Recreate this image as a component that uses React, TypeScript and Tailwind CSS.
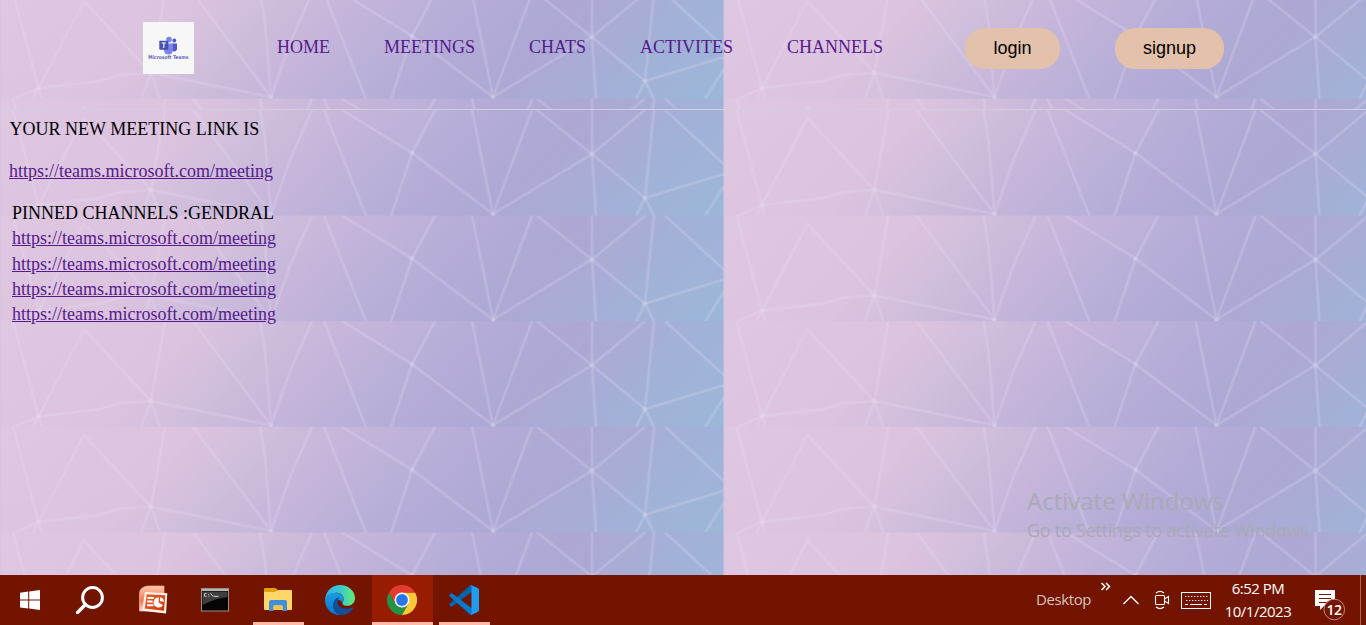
import type { ReactNode } from 'react';

const meshLines = [
  'M13 0L38.5 95L84 8L151 80L165 0',
  'M14 106L38.5 95L33 106M38.5 95L42 106M38.5 95L100 88L120 82L151 80L271 104',
  'M151 80L141 106M151 80L160 106',
  'M193 0L271 104L265 30L260 0M312 0L290 50L271 104',
  'M324 0L366 106M435 0L412 43L391 106M342 0L412 43L493 104',
  'M472 0L493 104L532 0M493 104L592 44L645 88',
  'M537 0L592 44L645 0M592 0L592 44L596 106',
  'M654 0L645 88L724 64M645 88L636 106M645 88L654 106',
  'M665 0L724 54M724 76L705 106',
];

const nodes = [
  [38.5, 95],
  [151, 80],
  [271, 104],
  [412, 43],
  [493, 104],
  [592, 44],
  [645, 88],
];

function MeshBackground({ id, shift }: { id: string; shift: number }) {
  return (
    <svg className="absolute inset-0 h-full w-full" aria-hidden="true">
      <defs>
        <linearGradient id={`${id}-g`} gradientUnits="userSpaceOnUse" x1="0" y1="0" x2="452" y2="407">
          <stop offset="0" stopColor="#dec7e1" />
          <stop offset="0.24" stopColor="#dcc3df" />
          <stop offset="0.3" stopColor="#d4c0dd" />
          <stop offset="0.37" stopColor="#cabbdb" />
          <stop offset="0.44" stopColor="#c5b5da" />
          <stop offset="0.51" stopColor="#bdb1d9" />
          <stop offset="0.6" stopColor="#b4acd7" />
          <stop offset="0.71" stopColor="#ada8d4" />
          <stop offset="0.79" stopColor="#a9acd5" />
          <stop offset="0.87" stopColor="#a2b1d7" />
          <stop offset="1" stopColor="#9bb7d8" />
        </linearGradient>
        <pattern id={id} patternUnits="userSpaceOnUse" x="0" y={shift} width="723.5" height="105.6">
          <rect width="724" height="106" fill={`url(#${id}-g)`} />
          <path d="M592 0V44L539 0Z" fill="#b0a4d3" opacity=".25" />
          <path d="M311 0H435L412 43L342 0Z" fill="#c4b3db" opacity=".25" />
          <path d="M654 0H724V64L645 88Z" fill="#9fb2d8" opacity=".35" />
          <g fill="none" stroke="#e9e0f4" strokeWidth="2.6" strokeLinejoin="round" opacity=".23">
            {meshLines.map((d) => (
              <path key={d} d={d} />
            ))}
          </g>
          {nodes.map(([x, y]) => (
            <circle key={x} cx={x} cy={y} r="2.2" fill="#ebe2f5" opacity=".35" />
          ))}
          <rect width="1" height="106" fill="#d6c4df" opacity=".7" />
        </pattern>
      </defs>
      <rect width="100%" height="100%" fill={`url(#${id})`} />
    </svg>
  );
}

function TeamsLogo() {
  return (
    <svg width="51" height="52" viewBox="0 0 51 52" className="block overflow-visible">
      <rect width="51" height="52" fill="#f7f7f8" />
      <circle cx="26" cy="17.5" r="2.8" fill="#7b83eb" />
      <circle cx="31.3" cy="18.5" r="1.9" fill="#5059c9" />
      <path d="M29 21.5h5v6a3 3 0 0 1-5 1z" fill="#5059c9" />
      <path d="M21 21.5h9v6.5a4.5 4.5 0 0 1-9 0z" fill="#7b83eb" />
      <rect x="16.3" y="18.7" width="9" height="9" rx=".6" fill="#4650b5" />
      <path d="M18.6 21h4.4M20.8 21v5" stroke="#fff" strokeWidth="1.1" />
      <text x="5.3" y="36.8" textLength="40" lengthAdjust="spacingAndGlyphs" className="font-['DejaVu_Sans',sans-serif] text-[5px] font-bold" fill="#5d65bd">
        Microsoft Teams
      </text>
    </svg>
  );
}

function WindowsIcon() {
  return (
    <svg width="20" height="20" viewBox="0 0 20 20" fill="#fff">
      <path d="M0 2.7L8.2 1.6V9.5H0zM9.2 1.4L20 0V9.5H9.2zM0 10.5H8.2V18.5L0 17.4zM9.2 10.5H20V20L9.2 18.6z" />
    </svg>
  );
}

function SearchIcon() {
  return (
    <svg width="28" height="28" viewBox="0 0 28 28" fill="none" stroke="#fff">
      <circle cx="16.5" cy="11.5" r="9.9" strokeWidth="3" />
      <path d="M9.5 18.5L1.5 26.5" strokeWidth="3.4" strokeLinecap="round" />
    </svg>
  );
}

function PowerPointIcon() {
  return (
    <svg width="30" height="30" viewBox="0 0 30 30">
      <defs>
        <linearGradient id="pp" x1="0" y1="0" x2="0" y2="1">
          <stop offset="0" stopColor="#ffc4ae" />
          <stop offset=".6" stopColor="#f27a55" />
          <stop offset="1" stopColor="#ffd9c8" />
        </linearGradient>
        <linearGradient id="pc" x1="0" y1="0" x2="1" y2="1">
          <stop offset="0" stopColor="#f0602f" />
          <stop offset="1" stopColor="#cf3208" />
        </linearGradient>
      </defs>
      <path d="M6 2Q8 1 11 1H26V9L22 26L1.5 26V10Q1 4 6 2z" fill="url(#pp)" stroke="#f6b29b" strokeWidth=".7" />
      <path d="M7 7L29.3 8.3L28 28.5L4 25.8z" fill="#fff3e9" />
      <path d="M8.7 9.2L27.2 10.3L26 25.8L6.8 23.6z" fill="url(#pc)" />
      <path d="M9.5 13h6.5M9.2 16.6h5.5M8.9 20.2h6.5" stroke="#fff" strokeWidth="2" />
      <path d="M21 12.5a5 5 0 1 0 4 7.4L20.7 17.8z" fill="#fff" />
      <path d="M22.2 12.2a4.4 4.4 0 0 1 3.6 4.6L22 16.2z" fill="#fff" />
    </svg>
  );
}

function TerminalIcon() {
  return (
    <svg width="28" height="24" viewBox="0 0 28 24">
      <rect x=".5" y=".5" width="27" height="22.5" fill="#050505" stroke="#98908d" />
      <path d="M1 1h26v2H1z" fill="#b8b4b2" />
      <path d="M1.5 3.5H26.5V9Q15 10 1.5 17z" fill="#3f3f3f" />
      <path d="M5.5 5.5H4.2Q3.2 5.5 3.2 7T4.2 8.4H5.5M7.7 6v.9M7.7 7.8v.8M9.5 5.2L12 8.5M12.5 8.3h5" stroke="#e5e5e5" strokeWidth=".9" fill="none" />
    </svg>
  );
}

function FolderIcon() {
  return (
    <svg width="28" height="24" viewBox="0 0 28 24">
      <path d="M0 1Q0 0 1 0H11.5L14 2.5V4H0z" fill="#e3a008" />
      <path d="M0 4H11L14 2H27Q28 2 28 3V21Q28 22 27 22H1Q0 22 0 21z" fill="#ffd667" />
      <path d="M5 14Q5 12 7 12H21Q23 12 23 14V23H18.5V17.5H9.5V23H5z" fill="#3f90d8" />
      <path d="M9.5 17.5H18.5V22H9.5z" fill="#f3c34a" />
    </svg>
  );
}

function EdgeIcon() {
  return (
    <svg width="30" height="30" viewBox="0 0 256 256">
      <defs>
        <linearGradient id="e1" x1="0" y1="0" x2="1" y2="0">
          <stop offset="0" stopColor="#35b1f1" />
          <stop offset=".5" stopColor="#36c9d0" />
          <stop offset="1" stopColor="#66eb6e" />
        </linearGradient>
        <linearGradient id="e2" x1="0" y1="0" x2="0" y2="1">
          <stop offset="0" stopColor="#1b9de2" />
          <stop offset="1" stopColor="#0873ce" />
        </linearGradient>
      </defs>
      <path d="M4 105C15 45 65 0 128 0C199 0 256 51 256 112C256 151 224 177 191 177C151 177 148 160 148 151C148 145 159 137 159 121C159 88 132 67 92 67C49 67 9 98 4 144z" fill="url(#e1)" />
      <path d="M0 128C2 90 37 66 80 66C127 66 159 91 159 121C159 137 148 145 148 151C126 104 76 136 76 174C76 218 108 254 150 254C65 268 0 207 0 128z" fill="url(#e2)" />
      <path d="M105 108C82 118 68 145 68 174C68 220 103 256 145 256C188 254 220 230 238 202C243 193 239 187 231 191C180 217 119 198 108 154C105 140 111 117 125 108Q115 104 105 108z" fill="#114f9b" />
    </svg>
  );
}

function ChromeIcon() {
  return (
    <svg width="30" height="30" viewBox="0 0 48 48">
      <path d="M3.2 12A24 24 0 0 0 24 48L34.4 30H13.6z" fill="#229342" />
      <path d="M24 12H44.8A24 24 0 0 1 24 48L34.4 30z" fill="#fcc934" />
      <path d="M3.2 12A24 24 0 0 1 44.8 12H24L13.6 30z" fill="#e33b2e" />
      <circle cx="24" cy="24" r="12" fill="#fff" />
      <circle cx="24" cy="24" r="9.5" fill="#2a75ec" />
    </svg>
  );
}

function CodeIcon() {
  return (
    <svg width="30" height="30" viewBox="0 0 100 100">
      <path d="M96 11L75 1Q71 -1 68 3L1 63Q-1 65 1 67L7 72Q9 74 11 72L93 10z" fill="#0065a9" />
      <path d="M96 89L75 99Q71 101 68 97L1 37Q-1 35 1 33L7 28Q9 26 11 28L93 90z" fill="#007acc" />
      <path d="M75 99Q71 101 69 97Q75 102 75 94V6Q75 -2 69 3Q71 -1 75 1L97 11Q100 13 100 17V83Q100 87 97 89z" fill="#1f9cf0" />
    </svg>
  );
}

function TaskButton({ children, running = false, active = false }: { children: ReactNode; running?: boolean; active?: boolean }) {
  return (
    <div className={active ? 'flex h-[50px] w-[61px] flex-col bg-[#981c00]' : 'flex h-[50px] w-[62.5px] flex-col'}>
      <div className="flex h-[47px] items-center justify-center pt-[2px] pr-px">{children}</div>
      {(running || active) && <div className={active ? 'h-[3px] bg-[#ffb9a9]' : 'mx-[5.75px] h-[3px] bg-[#ffb9a9]'} />}
    </div>
  );
}

function Taskbar() {
  return (
    <footer className="flex h-[50px] shrink-0 bg-[#731400] font-['Open_Sans','Noto_Sans',sans-serif] text-white">
      <div className="flex w-[60px] items-center justify-center">
        <WindowsIcon />
      </div>
      <div className="flex w-[62px] items-center pl-4">
        <SearchIcon />
      </div>
      <TaskButton>
        <PowerPointIcon />
      </TaskButton>
      <TaskButton>
        <TerminalIcon />
      </TaskButton>
      <TaskButton running>
        <FolderIcon />
      </TaskButton>
      <TaskButton>
        <EdgeIcon />
      </TaskButton>
      <TaskButton active>
        <ChromeIcon />
      </TaskButton>
      <TaskButton running>
        <CodeIcon />
      </TaskButton>
      <div className="ml-auto flex">
        <span className="w-[64px] pt-[12px] text-[15px] leading-[24px] tracking-[-0.4px] text-[#d5c3bf]">Desktop</span>
        <svg width="12" height="10" viewBox="0 0 12 10" fill="none" stroke="#fff" strokeWidth="1.5" className="mt-[7px]">
          <path d="M1.5 1L5 4.5L1.5 8M6 1L9.5 4.5L6 8" />
        </svg>
        <svg width="18" height="10" viewBox="0 0 18 10" fill="none" stroke="#fff" strokeWidth="1.3" className="mt-[20px] ml-[10px]">
          <path d="M1.5 9L9 1.5L16.5 9" />
        </svg>
        <svg width="16" height="20" viewBox="0 0 16 20" fill="none" stroke="#fff" strokeWidth="1.1" className="mt-[15px] ml-[14px]">
          <rect x="1.5" y="5.5" width="9" height="9" rx="1" />
          <path d="M10.5 9L14.5 6.5V13.5L10.5 11M2 3Q6 -.2 10 3M2 17Q6 20.2 10 17" />
        </svg>
        <svg width="30" height="18" viewBox="0 0 30 18" fill="none" stroke="#fff" className="mt-[17px] ml-[11px]">
          <rect x=".5" y=".5" width="29" height="16" />
          <path d="M4 4.5H27M5 8.5H27" strokeDasharray="1.3 1.7" />
          <path d="M4 12.5H7M9 12.5H21M23 12.5H26" />
        </svg>
        <div className="ml-[8px] w-[78px] pt-[2px] text-center text-[15px] leading-[23px] tracking-[-0.5px]">
          <div>6:52 PM</div>
          <div>10/1/2023</div>
        </div>
        <div className="relative mt-[15px] ml-[18px] h-[32px] w-[45px]">
          <svg width="32" height="32" viewBox="0 0 32 32">
            <path d="M0 0H20V16H9L5 20V16H0z" fill="#fff" />
            <path d="M4 4.5H16M4 8.5H16M4 12.5H13" stroke="#731400" />
            <circle cx="19.3" cy="19.5" r="10.3" fill="#731400" stroke="#c08a7d" strokeWidth="1" />
          </svg>
          <span className="absolute top-[10px] left-[9px] w-[20px] text-center text-[14px] leading-[20px] font-semibold tracking-[-0.6px]">12</span>
        </div>
        <div className="h-[50px] w-[6px] border-l border-[#a5695c]" />
      </div>
    </footer>
  );
}

const pinned = [1, 2, 3, 4];
const meetingUrl = 'https://teams.microsoft.com/meeting';

export default function App() {
  return (
    <div className="flex h-[625px] w-[1366px] flex-col overflow-hidden font-['Liberation_Serif',serif] text-[18px] text-black">
      <header className="relative h-[110px] shrink-0 border-b border-[#d3cddc]">
        <MeshBackground id="mesh-top" shift={-7} />
        <nav className="relative flex h-[96px] items-center pl-[143px] text-[#551a8b]">
          <TeamsLogo />
          <div className="ml-[83px] flex gap-[54px] pb-[2px]">
            <a>HOME</a>
            <a>MEETINGS</a>
            <a>CHATS</a>
            <a>ACTIVITES</a>
            <a>CHANNELS</a>
          </div>
          <div className="ml-[82px] flex gap-[55px] pt-px font-['Liberation_Sans',sans-serif] text-black">
            <button className="h-[41px] w-[95px] rounded-[20px] bg-[#e4c1ab]">login</button>
            <button className="h-[41px] w-[109px] rounded-[20px] bg-[#e4c1ab]">signup</button>
          </div>
        </nav>
      </header>
      <main className="relative flex-1">
        <MeshBackground id="mesh-main" shift={0} />
        <div className="relative flex flex-col gap-4 pt-[6px]">
          <p className="pl-[9.5px] leading-[26px]">YOUR NEW MEETING LINK IS</p>
          <p className="pl-[9px] leading-[26px]">
            <a className="text-[#551a8b] underline">{meetingUrl}</a>
          </p>
          <div className="pt-px pl-[12px] leading-[25.3px]">
            <p>PINNED CHANNELS :GENDRAL</p>
            {pinned.map((n) => (
              <p key={n}>
                <a className="text-[#551a8b] underline">{meetingUrl}</a>
              </p>
            ))}
          </div>
        </div>
        <div className="absolute top-[373px] left-[1027px] font-['Open_Sans','Noto_Sans',sans-serif] whitespace-nowrap text-[#aaa9b6]">
          <p className="text-[24px] leading-[36px]">Activate Windows</p>
          <p className="text-[18px] leading-[22px] tracking-[-0.25px]">Go to Settings to activate Windows.</p>
        </div>
      </main>
      <Taskbar />
    </div>
  );
}
